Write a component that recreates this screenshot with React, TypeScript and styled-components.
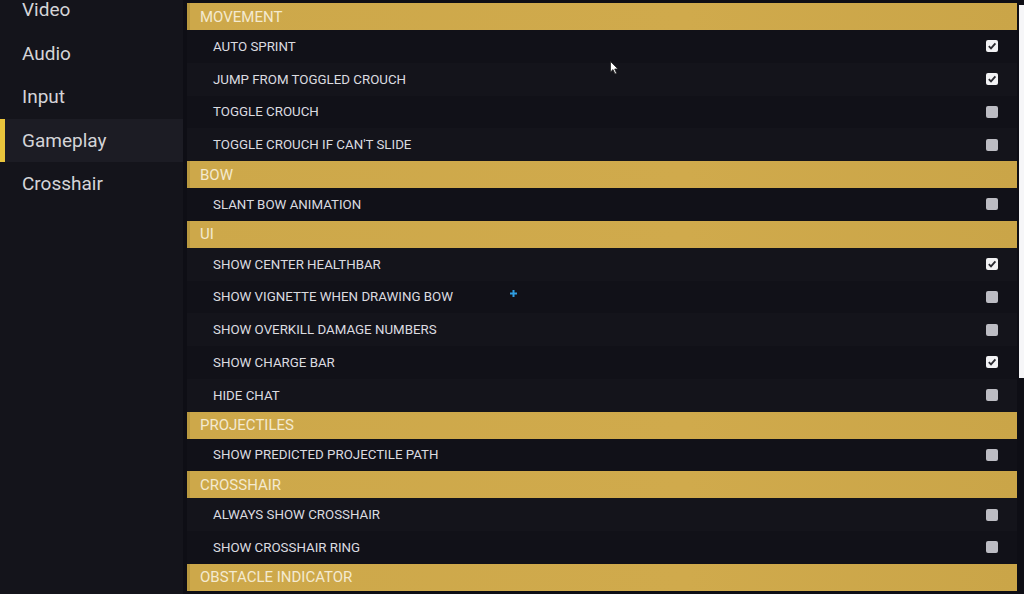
import styled, { createGlobalStyle } from 'styled-components';

type Setting = { label: string; checked: boolean };
type Section = { title: string; items: Setting[] };

const NAV = ['Video', 'Audio', 'Input', 'Gameplay', 'Crosshair'];

const SECTIONS: Section[] = [
  {
    title: 'MOVEMENT',
    items: [
      { label: 'AUTO SPRINT', checked: true },
      { label: 'JUMP FROM TOGGLED CROUCH', checked: true },
      { label: 'TOGGLE CROUCH', checked: false },
      { label: "TOGGLE CROUCH IF CAN'T SLIDE", checked: false },
    ],
  },
  { title: 'BOW', items: [{ label: 'SLANT BOW ANIMATION', checked: false }] },
  {
    title: 'UI',
    items: [
      { label: 'SHOW CENTER HEALTHBAR', checked: true },
      { label: 'SHOW VIGNETTE WHEN DRAWING BOW', checked: false },
      { label: 'SHOW OVERKILL DAMAGE NUMBERS', checked: false },
      { label: 'SHOW CHARGE BAR', checked: true },
      { label: 'HIDE CHAT', checked: false },
    ],
  },
  {
    title: 'PROJECTILES',
    items: [{ label: 'SHOW PREDICTED PROJECTILE PATH', checked: false }],
  },
  {
    title: 'CROSSHAIR',
    items: [
      { label: 'ALWAYS SHOW CROSSHAIR', checked: false },
      { label: 'SHOW CROSSHAIR RING', checked: false },
    ],
  },
  { title: 'OBSTACLE INDICATOR', items: [] },
];

const GlobalStyle = createGlobalStyle`
  html, body {
    margin: 0;
    padding: 0;
    background: #0e0e15;
    overflow: hidden;
  }
  * { box-sizing: border-box; }
`;

const Screen = styled.div`
  position: relative;
  width: 1024px;
  height: 594px;
  display: flex;
  background: #0e0e15;
  font-family: Roboto, 'Liberation Sans', sans-serif;
  overflow: hidden;
`;

const Sidebar = styled.nav`
  width: 183px;
  flex-shrink: 0;
  background: #14141b;
  display: flex;
  flex-direction: column;
  margin-top: -12px;
  margin-right: 4px;
`;

const NavItem = styled.div<{ $active?: boolean }>`
  height: 43.5px;
  display: flex;
  align-items: center;
  font-size: 19px;
  color: #d4d4d8;
  background: ${(p) => (p.$active ? '#1c1c24' : 'transparent')};
  border-left: 5px solid ${(p) => (p.$active ? '#e9c43c' : 'transparent')};
  padding-left: 17px;
`;

const Panel = styled.main`
  width: 830px;
  flex-shrink: 0;
  padding-top: 3px;
  display: flex;
  flex-direction: column;
`;

const Header = styled.div`
  height: 27px;
  flex-shrink: 0;
  display: flex;
  align-items: center;
  padding-left: 13px;
  background: linear-gradient(90deg, #b8983f 0 3px, #cda84a 3px, #d0aa4c 60%, #caa548);
  color: #f4ead0;
  font-size: 15px;
  font-weight: 400;
`;

const Row = styled.div<{ $shade: number }>`
  height: 32.75px;
  flex-shrink: 0;
  display: flex;
  align-items: center;
  justify-content: space-between;
  padding: 0 19px 0 26px;
  background: ${(p) => (p.$shade ? '#14141b' : '#111118')};
  color: #dcdce0;
  font-size: 13.3px;
  font-weight: 400;
`;

const Box = styled.span<{ $checked: boolean }>`
  width: 12px;
  height: 12px;
  border-radius: 2px;
  background: ${(p) => (p.$checked ? '#f2f2f4' : '#bcbcc3')};
  display: flex;
  align-items: center;
  justify-content: center;
`;

const ScrollTrack = styled.div`
  width: 7px;
  flex-shrink: 0;
  padding: 5px 0 0 2px;
`;

const ScrollThumb = styled.div`
  height: 373px;
  background: #f6f6f8;
`;

const Pointer = styled.svg`
  position: absolute;
  left: 610px;
  top: 61px;
`;

const Marker = styled.svg`
  position: absolute;
  left: 509px;
  top: 289px;
`;

const Check = () => (
  <svg width="10" height="10" viewBox="0 0 10 10">
    <path d="M1.8 5.2 L4 7.4 L8.4 2.4" fill="none" stroke="#2a2a30" strokeWidth="1.8" />
  </svg>
);

export default function App() {
  let n = 0;
  return (
    <Screen>
      <GlobalStyle />
      <Sidebar>
        {NAV.map((item) => (
          <NavItem key={item} $active={item === 'Gameplay'}>
            {item}
          </NavItem>
        ))}
      </Sidebar>
      <Panel>
        {SECTIONS.map((s) => (
          <div key={s.title}>
            <Header>{s.title}</Header>
            {s.items.map((it) => (
              <Row key={it.label} $shade={n++ % 2}>
                <span>{it.label}</span>
                <Box $checked={it.checked}>{it.checked && <Check />}</Box>
              </Row>
            ))}
          </div>
        ))}
      </Panel>
      <ScrollTrack>
        <ScrollThumb />
      </ScrollTrack>
      <Pointer width="10" height="16" viewBox="0 0 10 16">
        <path d="M0.5 0.5 L0.5 11 L3 8.6 L5 13 L6.6 12.3 L4.7 8 L8 8 Z" fill="#ffffff" stroke="#222" strokeWidth="0.8" />
      </Pointer>
      <Marker width="9" height="9" viewBox="0 0 9 9">
        <path d="M4.5 1 V8 M1 4.5 H8" stroke="#2f9de0" strokeWidth="2" />
      </Marker>
    </Screen>
  );
}
